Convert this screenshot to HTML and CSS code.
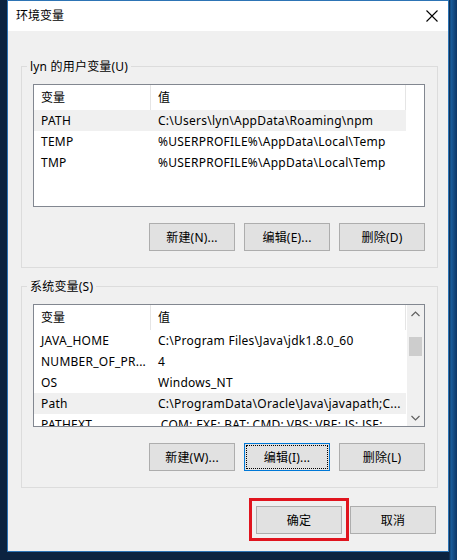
FILE: index.html
```html
<!DOCTYPE html>
<html lang="zh-CN">
<head>
<meta charset="utf-8">
<title>环境变量</title>
<link rel="stylesheet" href="styles.css">
</head>
<body>
<div class="window">
  <div class="titlebar">
    <span class="title">环境变量</span>
    <svg class="close" width="12" height="12" viewBox="0 0 12 12"><path d="M0.5 0.5 L11.5 11.5 M11.5 0.5 L0.5 11.5" stroke="#000" stroke-width="1.1" fill="none"/></svg>
  </div>
  <div class="dialog">
    <fieldset class="group">
      <legend>lyn 的用户变量(U)</legend>
      <div class="list">
        <div class="list-main">
          <div class="header">
            <div class="hcell c1">变量</div>
            <div class="hcell c2">值</div>
          </div>
          <div class="rows">
            <div class="row hl"><div class="cell c1">PATH</div><div class="cell c2">C:\Users\lyn\AppData\Roaming\npm</div></div>
            <div class="row"><div class="cell c1">TEMP</div><div class="cell c2">%USERPROFILE%\AppData\Local\Temp</div></div>
            <div class="row"><div class="cell c1">TMP</div><div class="cell c2">%USERPROFILE%\AppData\Local\Temp</div></div>
          </div>
        </div>
      </div>
      <div class="btnrow">
        <button class="btn">新建(N)...</button>
        <button class="btn">编辑(E)...</button>
        <button class="btn">删除(D)</button>
      </div>
    </fieldset>
    <fieldset class="group group2">
      <legend>系统变量(S)</legend>
      <div class="list">
        <div class="list-main">
          <div class="header">
            <div class="hcell c1">变量</div>
            <div class="hcell c2">值</div>
          </div>
          <div class="rows">
            <div class="row"><div class="cell c1">JAVA_HOME</div><div class="cell c2">C:\Program Files\Java\jdk1.8.0_60</div></div>
            <div class="row"><div class="cell c1">NUMBER_OF_PR...</div><div class="cell c2">4</div></div>
            <div class="row"><div class="cell c1">OS</div><div class="cell c2">Windows_NT</div></div>
            <div class="row hl"><div class="cell c1">Path</div><div class="cell c2">C:\ProgramData\Oracle\Java\javapath;C...</div></div>
            <div class="row"><div class="cell c1">PATHEXT</div><div class="cell c2">.COM;.EXE;.BAT;.CMD;.VBS;.VBE;.JS;.JSE;</div></div>
          </div>
        </div>
        <div class="scrollbar">
          <div class="arrow"><svg width="9" height="6" viewBox="0 0 9 6"><path d="M0.5 5 L4.5 1 L8.5 5" stroke="#606060" stroke-width="1.2" fill="none"/></svg></div>
          <div class="track"><div class="thumb"></div></div>
          <div class="arrow"><svg width="9" height="6" viewBox="0 0 9 6"><path d="M0.5 1 L4.5 5 L8.5 1" stroke="#606060" stroke-width="1.2" fill="none"/></svg></div>
        </div>
      </div>
      <div class="btnrow">
        <button class="btn">新建(W)...</button>
        <button class="btn focused">编辑(I)...</button>
        <button class="btn">删除(L)</button>
      </div>
    </fieldset>
    <div class="footer">
      <div class="mark"><button class="btn">确定</button></div>
      <button class="btn cancel">取消</button>
    </div>
  </div>
</div>
</body>
</html>
```
FILE: styles.css
```css
html, body {
  margin: 0;
  padding: 0;
}
body {
  width: 457px;
  height: 560px;
  overflow: hidden;
  background: linear-gradient(90deg, #0b2340 0px, #0b2340 449px, #1a5d9c 451px, #0d3666 457px);
  font-family: "Noto Sans", "Noto Sans CJK SC", sans-serif;
  font-size: 12px;
  color: #000;
}
.window {
  margin-left: 7px;
  width: 442px;
  height: 552px;
  box-sizing: border-box;
  border: 1px solid #2d74b5;
  background: #f0f0f0;
  display: flex;
  flex-direction: column;
}
.titlebar {
  height: 30px;
  flex: none;
  background: #fff;
  display: flex;
  align-items: center;
  justify-content: space-between;
  padding: 0 10px 0 8px;
}
.title {
  font-size: 12px;
  line-height: 16px;
}
.close {
  display: block;
}
.dialog {
  padding: 27px 10px 0 13px;
  display: flex;
  flex-direction: column;
}
.group {
  margin: 0;
  padding: 9px 12px 16px 11px;
  border: 1px solid #dcdcdc;
  min-width: 0;
}
.group2 {
  margin-top: 10px;
}
legend {
  padding: 0 3px;
  margin-left: -6px;
  line-height: 17px;
  font-size: 12px;
  letter-spacing: 0.2px;
}
.list {
  height: 123px;
  box-sizing: border-box;
  border: 1px solid #828790;
  background: #fff;
  display: flex;
  overflow: hidden;
}
.list-main {
  flex: 1;
  min-width: 0;
  overflow: hidden;
}
.header {
  display: flex;
  height: 25px;
  width: 372px;
}
.hcell {
  box-sizing: border-box;
  border-right: 1px solid #e5e5e5;
  padding-left: 7px;
  line-height: 25px;
  height: 25px;
}
.c1 {
  width: 117px;
  flex: none;
}
.c2 {
  width: 255px;
  flex: none;
}
.rows {
  width: 372px;
}
.row {
  display: flex;
  height: 21px;
}
.row.hl {
  background: #f0f0f0;
}
.cell {
  box-sizing: border-box;
  padding-left: 7px;
  line-height: 21px;
  white-space: nowrap;
  overflow: hidden;
  letter-spacing: 0.25px;
}
.scrollbar {
  width: 17px;
  flex: none;
  background: #f0f0f0;
  display: flex;
  flex-direction: column;
}
.arrow {
  height: 17px;
  display: flex;
  align-items: center;
  justify-content: center;
}
.track {
  flex: 1;
  padding: 15px 2px 0 2px;
}
.thumb {
  height: 19px;
  background: #cdcdcd;
}
.btnrow {
  display: flex;
  justify-content: flex-end;
  gap: 9px;
  margin-top: 16px;
}
.btn {
  width: 86px;
  height: 28px;
  box-sizing: border-box;
  border: 1px solid #adadad;
  background: #e1e1e1;
  font-family: "Noto Sans", "Noto Sans CJK SC", sans-serif;
  font-size: 12px;
  letter-spacing: 0.2px;
  color: #000;
  padding: 0;
  margin: 0;
}
.btn.focused {
  border-color: #0078d7;
  outline: 1px dotted #000;
  outline-offset: -3px;
}
.footer {
  display: flex;
  justify-content: flex-end;
  align-items: flex-start;
  margin-top: 10px;
  padding-right: 2px;
}
.mark {
  border: 3px solid #e0141e;
  padding: 5px 4px 4px 4px;
}
.cancel {
  margin-left: 1px;
  margin-top: 8px;
}
```
